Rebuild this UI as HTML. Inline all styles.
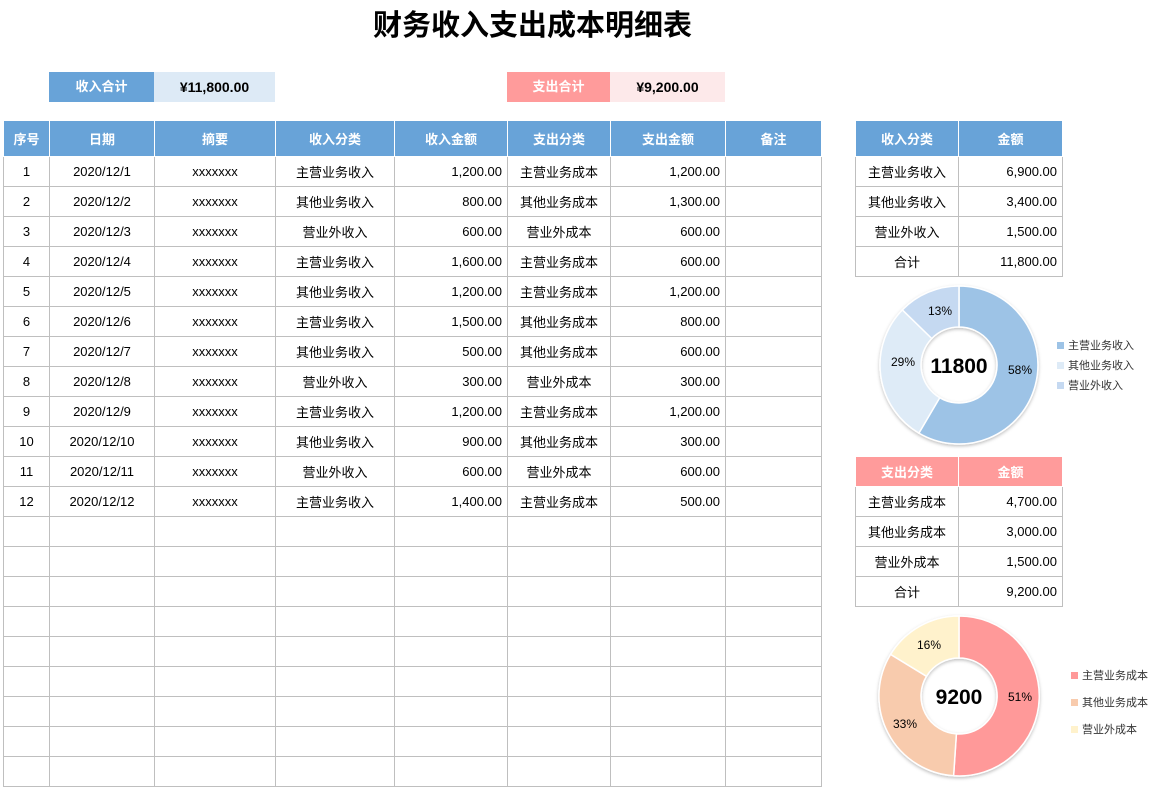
<!DOCTYPE html>
<html><head><meta charset="utf-8"><style>
*{margin:0;padding:0;box-sizing:border-box}
body{width:1165px;height:791px;background:#fff;position:relative;overflow:hidden;font-family:"Liberation Sans","Noto Sans CJK SC",sans-serif;font-size:13px;color:#000}
.abs{position:absolute}
.title{left:0;width:1065px;top:6px;text-align:center;font-size:29px;font-weight:bold;line-height:40px}
.box{height:30px;line-height:30px;text-align:center;font-size:13px}
table{border-collapse:collapse;position:absolute;table-layout:fixed}
td{border:1px solid #bfbfbf;height:30px;text-align:center;padding:0 5px;white-space:nowrap}
th{height:35px;color:#fff;font-weight:bold;border:1px solid #fff;border-top:none;font-size:13px}
.b th{background:#68a3d8}
.p th{background:#ff9b9b;height:29px}
td.r{text-align:right}
.leg{font-size:11px;color:#333;line-height:14px}
.leg i{display:inline-block;width:7px;height:7px;margin-right:4px;vertical-align:0px}
</style></head><body>
<div class="abs title">财务收入支出成本明细表</div>
<div class="abs box" style="left:49px;top:72px;width:105px;background:#68a3d8;color:#fff;font-weight:bold">收入合计</div>
<div class="abs box" style="left:154px;top:72px;width:121px;background:#ddeaf6;font-weight:bold;font-size:14px">¥11,800.00</div>
<div class="abs box" style="left:507px;top:72px;width:103px;background:#ff9b9b;color:#fff;font-weight:bold">支出合计</div>
<div class="abs box" style="left:610px;top:72px;width:115px;background:#fde9ea;font-weight:bold;font-size:14px">¥9,200.00</div>

<table class="b" style="left:3px;top:121px;width:818px">
<colgroup><col style="width:46px"><col style="width:105px"><col style="width:121px"><col style="width:119px"><col style="width:113px"><col style="width:103px"><col style="width:115px"><col style="width:96px"></colgroup>
<tr><th>序号</th><th>日期</th><th>摘要</th><th>收入分类</th><th>收入金额</th><th>支出分类</th><th>支出金额</th><th>备注</th></tr>
<tr><td>1</td><td>2020/12/1</td><td>xxxxxxx</td><td>主营业务收入</td><td class="r">1,200.00</td><td>主营业务成本</td><td class="r">1,200.00</td><td></td></tr>
<tr><td>2</td><td>2020/12/2</td><td>xxxxxxx</td><td>其他业务收入</td><td class="r">800.00</td><td>其他业务成本</td><td class="r">1,300.00</td><td></td></tr>
<tr><td>3</td><td>2020/12/3</td><td>xxxxxxx</td><td>营业外收入</td><td class="r">600.00</td><td>营业外成本</td><td class="r">600.00</td><td></td></tr>
<tr><td>4</td><td>2020/12/4</td><td>xxxxxxx</td><td>主营业务收入</td><td class="r">1,600.00</td><td>主营业务成本</td><td class="r">600.00</td><td></td></tr>
<tr><td>5</td><td>2020/12/5</td><td>xxxxxxx</td><td>其他业务收入</td><td class="r">1,200.00</td><td>主营业务成本</td><td class="r">1,200.00</td><td></td></tr>
<tr><td>6</td><td>2020/12/6</td><td>xxxxxxx</td><td>主营业务收入</td><td class="r">1,500.00</td><td>其他业务成本</td><td class="r">800.00</td><td></td></tr>
<tr><td>7</td><td>2020/12/7</td><td>xxxxxxx</td><td>其他业务收入</td><td class="r">500.00</td><td>其他业务成本</td><td class="r">600.00</td><td></td></tr>
<tr><td>8</td><td>2020/12/8</td><td>xxxxxxx</td><td>营业外收入</td><td class="r">300.00</td><td>营业外成本</td><td class="r">300.00</td><td></td></tr>
<tr><td>9</td><td>2020/12/9</td><td>xxxxxxx</td><td>主营业务收入</td><td class="r">1,200.00</td><td>主营业务成本</td><td class="r">1,200.00</td><td></td></tr>
<tr><td>10</td><td>2020/12/10</td><td>xxxxxxx</td><td>其他业务收入</td><td class="r">900.00</td><td>其他业务成本</td><td class="r">300.00</td><td></td></tr>
<tr><td>11</td><td>2020/12/11</td><td>xxxxxxx</td><td>营业外收入</td><td class="r">600.00</td><td>营业外成本</td><td class="r">600.00</td><td></td></tr>
<tr><td>12</td><td>2020/12/12</td><td>xxxxxxx</td><td>主营业务收入</td><td class="r">1,400.00</td><td>主营业务成本</td><td class="r">500.00</td><td></td></tr>
<tr><td></td><td></td><td></td><td></td><td></td><td></td><td></td><td></td></tr>
<tr><td></td><td></td><td></td><td></td><td></td><td></td><td></td><td></td></tr>
<tr><td></td><td></td><td></td><td></td><td></td><td></td><td></td><td></td></tr>
<tr><td></td><td></td><td></td><td></td><td></td><td></td><td></td><td></td></tr>
<tr><td></td><td></td><td></td><td></td><td></td><td></td><td></td><td></td></tr>
<tr><td></td><td></td><td></td><td></td><td></td><td></td><td></td><td></td></tr>
<tr><td></td><td></td><td></td><td></td><td></td><td></td><td></td><td></td></tr>
<tr><td></td><td></td><td></td><td></td><td></td><td></td><td></td><td></td></tr>
<tr><td></td><td></td><td></td><td></td><td></td><td></td><td></td><td></td></tr>
</table>

<table class="b" style="left:855px;top:121px;width:207px">
<colgroup><col style="width:103px"><col style="width:104px"></colgroup>
<tr><th>收入分类</th><th>金额</th></tr>
<tr><td>主营业务收入</td><td class="r">6,900.00</td></tr>
<tr><td>其他业务收入</td><td class="r">3,400.00</td></tr>
<tr><td>营业外收入</td><td class="r">1,500.00</td></tr>
<tr><td>合计</td><td class="r">11,800.00</td></tr>
</table>

<table class="p" style="left:855px;top:457px;width:207px">
<colgroup><col style="width:103px"><col style="width:104px"></colgroup>
<tr><th>支出分类</th><th>金额</th></tr>
<tr><td>主营业务成本</td><td class="r">4,700.00</td></tr>
<tr><td>其他业务成本</td><td class="r">3,000.00</td></tr>
<tr><td>营业外成本</td><td class="r">1,500.00</td></tr>
<tr><td>合计</td><td class="r">9,200.00</td></tr>
</table>

<svg class="abs" style="left:869px;top:275px" width="180" height="180" viewBox="-90 -90 180 180">
<defs><filter id="sh" x="-20%" y="-20%" width="140%" height="140%"><feDropShadow dx="0" dy="1.5" stdDeviation="1.5" flood-color="#000" flood-opacity="0.25"/></filter></defs>
<g filter="url(#sh)" stroke="#fff" stroke-width="1.5">
<path d="M0,-79 A79,79 0 1 1 -40.1,68.1 L-19.3,32.7 A38,38 0 1 0 0,-38 Z" fill="#9dc3e6"/>
<path d="M-40.1,68.1 A79,79 0 0 1 -56.6,-55.1 L-27.2,-26.5 A38,38 0 0 0 -19.3,32.7 Z" fill="#deebf7"/>
<path d="M-56.6,-55.1 A79,79 0 0 1 0,-79 L0,-38 A38,38 0 0 0 -27.2,-26.5 Z" fill="#c5d9f1"/>
</g>
<text x="0" y="8" text-anchor="middle" font-size="21" font-weight="bold" font-family="Liberation Sans,sans-serif">11800</text>
<text x="61" y="9" text-anchor="middle" font-size="12" font-family="Liberation Sans,sans-serif">58%</text>
<text x="-56" y="1" text-anchor="middle" font-size="12" font-family="Liberation Sans,sans-serif">29%</text>
<text x="-19" y="-50" text-anchor="middle" font-size="12" font-family="Liberation Sans,sans-serif">13%</text>
</svg>
<div class="abs leg" style="left:1057px;top:339px">
<div><i style="background:#9dc3e6"></i>主营业务收入</div>
<div style="margin-top:6px"><i style="background:#deebf7"></i>其他业务收入</div>
<div style="margin-top:6px"><i style="background:#c5d9f1"></i>营业外收入</div>
</div>

<svg class="abs" style="left:869px;top:606px" width="180" height="180" viewBox="-90 -90 180 180">
<g filter="url(#sh)" stroke="#fff" stroke-width="1.5">
<path d="M0,-80 A80,80 0 1 1 -5.4,79.8 L-2.6,37.9 A38,38 0 1 0 0,-38 Z" fill="#ff9999"/>
<path d="M-5.4,79.8 A80,80 0 0 1 -68.4,-41.6 L-32.5,-19.7 A38,38 0 0 0 -2.6,37.9 Z" fill="#f8cbad"/>
<path d="M-68.4,-41.6 A80,80 0 0 1 0,-80 L0,-38 A38,38 0 0 0 -32.5,-19.7 Z" fill="#fff2cc"/>
</g>
<text x="0" y="8" text-anchor="middle" font-size="21" font-weight="bold" font-family="Liberation Sans,sans-serif">9200</text>
<text x="61" y="5" text-anchor="middle" font-size="12" font-family="Liberation Sans,sans-serif">51%</text>
<text x="-54" y="32" text-anchor="middle" font-size="12" font-family="Liberation Sans,sans-serif">33%</text>
<text x="-30" y="-47" text-anchor="middle" font-size="12" font-family="Liberation Sans,sans-serif">16%</text>
</svg>
<div class="abs leg" style="left:1071px;top:669px">
<div><i style="background:#ff9999"></i>主营业务成本</div>
<div style="margin-top:13px"><i style="background:#f8cbad"></i>其他业务成本</div>
<div style="margin-top:13px"><i style="background:#fff2cc"></i>营业外成本</div>
</div>
</body></html>
